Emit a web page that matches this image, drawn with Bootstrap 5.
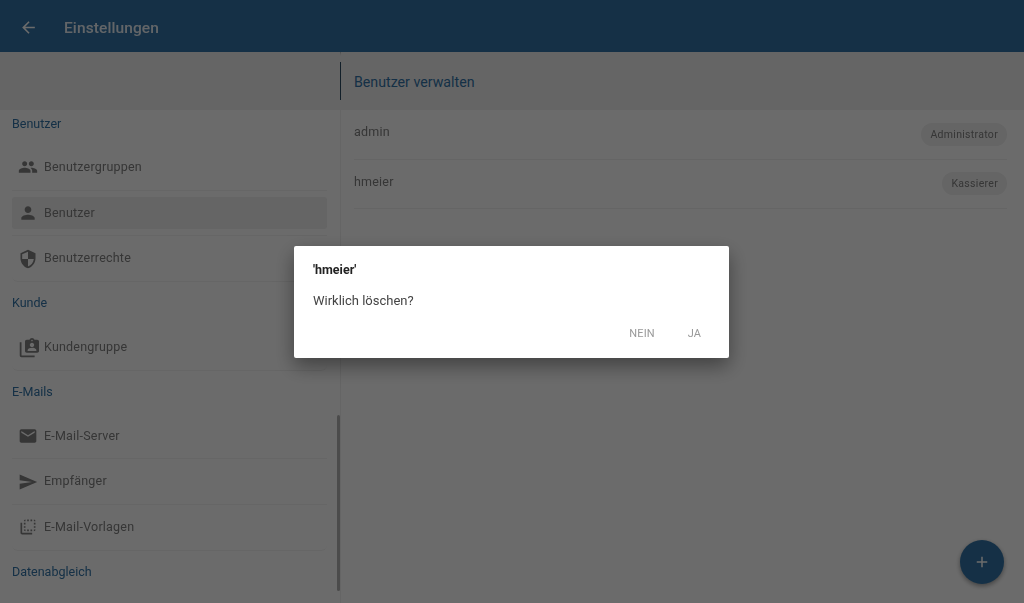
<!doctype html>
<html lang="de">
<head>
    <meta charset="utf-8">
    <meta name="viewport" content="width=device-width, initial-scale=1">
    <title>Einstellungen</title>
    <link href="https://cdn.jsdelivr.net/npm/bootstrap@5.3.3/dist/css/bootstrap.min.css" rel="stylesheet">
    <style>
        html, body { height: 603px; overflow: hidden; }
        body { font-family: Roboto, "Liberation Sans", sans-serif; background: #fff; color: #808080; font-size: 12.5px; filter: blur(.5px); }
        svg { fill: currentColor; display: block; flex-shrink: 0; }

        .app-bar { height: 52px; background: #3274a8; color: #fff; padding-left: 19px; gap: 26px; box-shadow: 0 1px 3px rgba(0,0,0,.3); position: relative; }
        .back-icon { margin-top: 2px; }
        .app-title { font-size: 15.5px; font-weight: 500; letter-spacing: .1px; color: rgba(255,255,255,.9); padding-top: 5px; }

        .settings-body { height: 551px; }
        .side-pane { width: 340px; flex-shrink: 0; position: relative; }
        .detail-pane { flex-grow: 1; border-left: 1px solid #f0f0f0; }
        .pane-spacer { height: 58px; background: #f1f1f1; }
        .pane-head { height: 58px; background: #f1f1f1; padding: 4px 0 0 13px; color: #3274a8; font-size: 14.2px; position: relative; }
        .pane-head::before { content: ""; position: absolute; left: -1px; top: 10px; bottom: 10px; width: 1px; background: #2c4a63; }

        .group-label { height: 43.6px; color: #3274a8; font-size: 12.5px; padding-left: 12px; }
        .group-label.first-group { height: 28px; margin-bottom: 7.2px; }
        .group-label.mail-group { height: 42.6px; }
        .set-list { margin: 0 13px 0 12px; }
        .set-item { height: 45.6px; border: 0; border-bottom: 1px solid #f3f3f3; border-radius: 0; background: transparent; color: #808080; padding: 0 0 0 6px; gap: 6px; font-size: 12.5px; letter-spacing: .2px; position: relative; }
        .set-item.current::before { content: ""; position: absolute; left: 0; right: 0; top: 6px; bottom: 6px; background: #f0f0f0; border-radius: 3px; }
        .set-item > * { position: relative; }
        .item-icon-wide { margin-right: -1px; }
        .side-scroll { position: absolute; right: 0; top: 363px; height: 176px; width: 3px; background: #b4b4b4; border-radius: 2px; }

        .user-row { height: 49.6px; margin: 0 17px 0 13px; border-bottom: 1px solid #f0f0f0; font-size: 12.5px; letter-spacing: .2px; color: #808080; }
        .user-name { margin-top: -3px; }
        .role-pill { background: #f0f0f0; border-radius: 12px; font-size: 10.5px; letter-spacing: .3px; color: #808080; padding: 0 9px; line-height: 23px; }

        .modal-backdrop { --bs-backdrop-opacity: .58; }
        .confirm-dialog { --bs-modal-width: 435px; margin: 246px 0 0 294px; }
        .confirm-dialog .modal-content { border: 0; border-radius: 2px; height: 112px; padding: 16px 19px 0; color: #444; box-shadow: 0 8px 20px rgba(0,0,0,.4); }
        .confirm-title { font-size: 12.5px; font-weight: 700; color: #222; line-height: 15px; }
        .confirm-text { font-size: 13px; line-height: 15px; margin-top: 16px; }
        .confirm-actions { margin-top: 19px; padding-right: 9px; gap: 33px; font-size: 11px; letter-spacing: .1px; color: #999; line-height: 13px; }
        .confirm-actions button { border: 0; padding: 0; background: none; color: inherit; font-size: inherit; letter-spacing: inherit; }

        .add-fab { position: fixed; left: 960px; top: 540px; width: 44px; height: 44px; border: 0; padding: 0; border-radius: 50%; background: #3274a8; color: #fff; box-shadow: 0 2px 5px rgba(0,0,0,.4); }
    </style>
</head>
<body>
    <header class="app-bar d-flex align-items-center">
        <svg class="back-icon" width="19" height="19" viewBox="0 0 24 24"><path d="M20 11H7.83l5.59-5.59L12 4l-8 8 8 8 1.41-1.41L7.83 13H20v-2z"/></svg>
        <span class="app-title">Einstellungen</span>
    </header>

    <div class="settings-body d-flex">
        <aside class="side-pane">
            <div class="pane-spacer"></div>
            <div class="group-label first-group d-flex align-items-center">Benutzer</div>
            <div class="list-group set-list">
                <a class="list-group-item set-item d-flex align-items-center">
                    <svg width="20" height="20" viewBox="0 0 24 24"><path d="M16 11c1.66 0 2.99-1.34 2.99-3S17.66 5 16 5c-1.66 0-3 1.34-3 3s1.34 3 3 3zm-8 0c1.66 0 2.99-1.34 2.99-3S9.66 5 8 5C6.34 5 5 6.34 5 8s1.34 3 3 3zm0 2c-2.33 0-7 1.17-7 3.5V19h14v-2.5c0-2.33-4.67-3.5-7-3.5zm8 0c-.29 0-.62.02-.97.05 1.16.84 1.97 1.97 1.97 3.45V19h6v-2.5c0-2.33-4.67-3.5-7-3.5z"/></svg>
                    <span>Benutzergruppen</span>
                </a>
                <a class="list-group-item set-item current d-flex align-items-center">
                    <svg width="20" height="20" viewBox="0 0 24 24"><path d="M12 12c2.21 0 4-1.79 4-4s-1.79-4-4-4-4 1.79-4 4 1.79 4 4 4zm0 2c-2.67 0-8 1.34-8 4v2h16v-2c0-2.66-5.33-4-8-4z"/></svg>
                    <span>Benutzer</span>
                </a>
                <a class="list-group-item set-item d-flex align-items-center">
                    <svg width="20" height="20" viewBox="0 0 24 24"><path d="M12 1L3 5v6c0 5.55 3.84 10.74 9 12 5.16-1.26 9-6.45 9-12V5l-9-4zm0 10.99h7c-.53 4.12-3.28 7.79-7 8.94V12H5V6.3l7-3.11v8.8z"/></svg>
                    <span>Benutzerrechte</span>
                </a>
            </div>
            <div class="group-label d-flex align-items-center">Kunde</div>
            <div class="list-group set-list">
                <a class="list-group-item set-item d-flex align-items-center">
                    <svg class="item-icon-wide" width="21" height="21" viewBox="0 0 24 24"><path d="M22 3h-3.200C18.400 2 17.400 1 16 1s-2.400 1-2.800 2H10C8.900 3 8 3.900 8 5v11c0 1.100.9 2 2 2h12c1.100 0 2-.9 2-2V5c0-1.100-.9-2-2-2zm-6 .2c.5 0 .9.400.9.900s-.4.900-.9.900-.9-.4-.9-.9.4-.9.9-.9zm0 3.300c1.400 0 2.500 1.100 2.500 2.500s-1.100 2.500-2.500 2.500-2.500-1.100-2.500-2.500 1.100-2.500 2.500-2.500zm5 9.500H11v-1.200c0-1.700 3.300-2.600 5-2.600s5 .9 5 2.600V16z"/><path d="M4 6H2v15c0 1.100.9 2 2 2h15v-2H4V6z"/></svg>
                    <span>Kundengruppe</span>
                </a>
            </div>
            <div class="group-label mail-group d-flex align-items-center">E-Mails</div>
            <div class="list-group set-list">
                <a class="list-group-item set-item d-flex align-items-center">
                    <svg width="20" height="20" viewBox="0 0 24 24"><path d="M20 4H4c-1.100 0-1.990.9-1.990 2L2 18c0 1.100.9 2 2 2h16c1.100 0 2-.9 2-2V6c0-1.100-.9-2-2-2zm0 4l-8 5-8-5V6l8 5 8-5v2z"/></svg>
                    <span>E-Mail-Server</span>
                </a>
                <a class="list-group-item set-item d-flex align-items-center">
                    <svg width="20" height="20" viewBox="0 0 24 24"><path d="M2.010 21L23 12 2.010 3 2 10l15 2-15 2z"/></svg>
                    <span>Empfänger</span>
                </a>
                <a class="list-group-item set-item d-flex align-items-center">
                    <svg width="20" height="20" viewBox="0 0 24 24"><path d="M9 7H7v2h2V7zm0 4H7v2h2v-2zm0-8c-1.110 0-2 .9-2 2h2V3zm4 12h-2v2h2v-2zm6-12v2h2c0-1.100-.9-2-2-2zm-6 0h-2v2h2V3zM9 17v-2H7c0 1.100.89 2 2 2zm10-4h2v-2h-2v2zm0-4h2V7h-2v2zm0 8c1.100 0 2-.9 2-2h-2v2zM5 7H3v12c0 1.100.89 2 2 2h12v-2H5V7zm10-2h2V3h-2v2zm0 12h2v-2h-2v2z"/></svg>
                    <span>E-Mail-Vorlagen</span>
                </a>
            </div>
            <div class="group-label d-flex align-items-center">Datenabgleich</div>
            <div class="side-scroll"></div>
        </aside>

        <main class="detail-pane">
            <div class="pane-head d-flex align-items-center">Benutzer verwalten</div>
            <div class="user-row d-flex align-items-center justify-content-between">
                <span class="user-name">admin</span>
                <span class="role-pill">Administrator</span>
            </div>
            <div class="user-row d-flex align-items-center justify-content-between">
                <span class="user-name">hmeier</span>
                <span class="role-pill">Kassierer</span>
            </div>
        </main>
    </div>

    <button class="add-fab d-flex align-items-center justify-content-center" type="button">
        <svg width="18" height="18" viewBox="0 0 24 24"><path d="M19 13h-6v6h-2v-6H5v-2h6V5h2v6h6v2z"/></svg>
    </button>

    <div class="modal-backdrop show"></div>
    <div class="modal d-block" tabindex="-1">
        <div class="modal-dialog confirm-dialog">
            <div class="modal-content">
                <div class="confirm-title">'hmeier'</div>
                <div class="confirm-text">Wirklich löschen?</div>
                <div class="confirm-actions d-flex justify-content-end">
                    <button type="button">NEIN</button>
                    <button type="button">JA</button>
                </div>
            </div>
        </div>
    </div>

    <script src="https://cdn.jsdelivr.net/npm/bootstrap@5.3.3/dist/js/bootstrap.bundle.min.js"></script>
</body>
</html>
